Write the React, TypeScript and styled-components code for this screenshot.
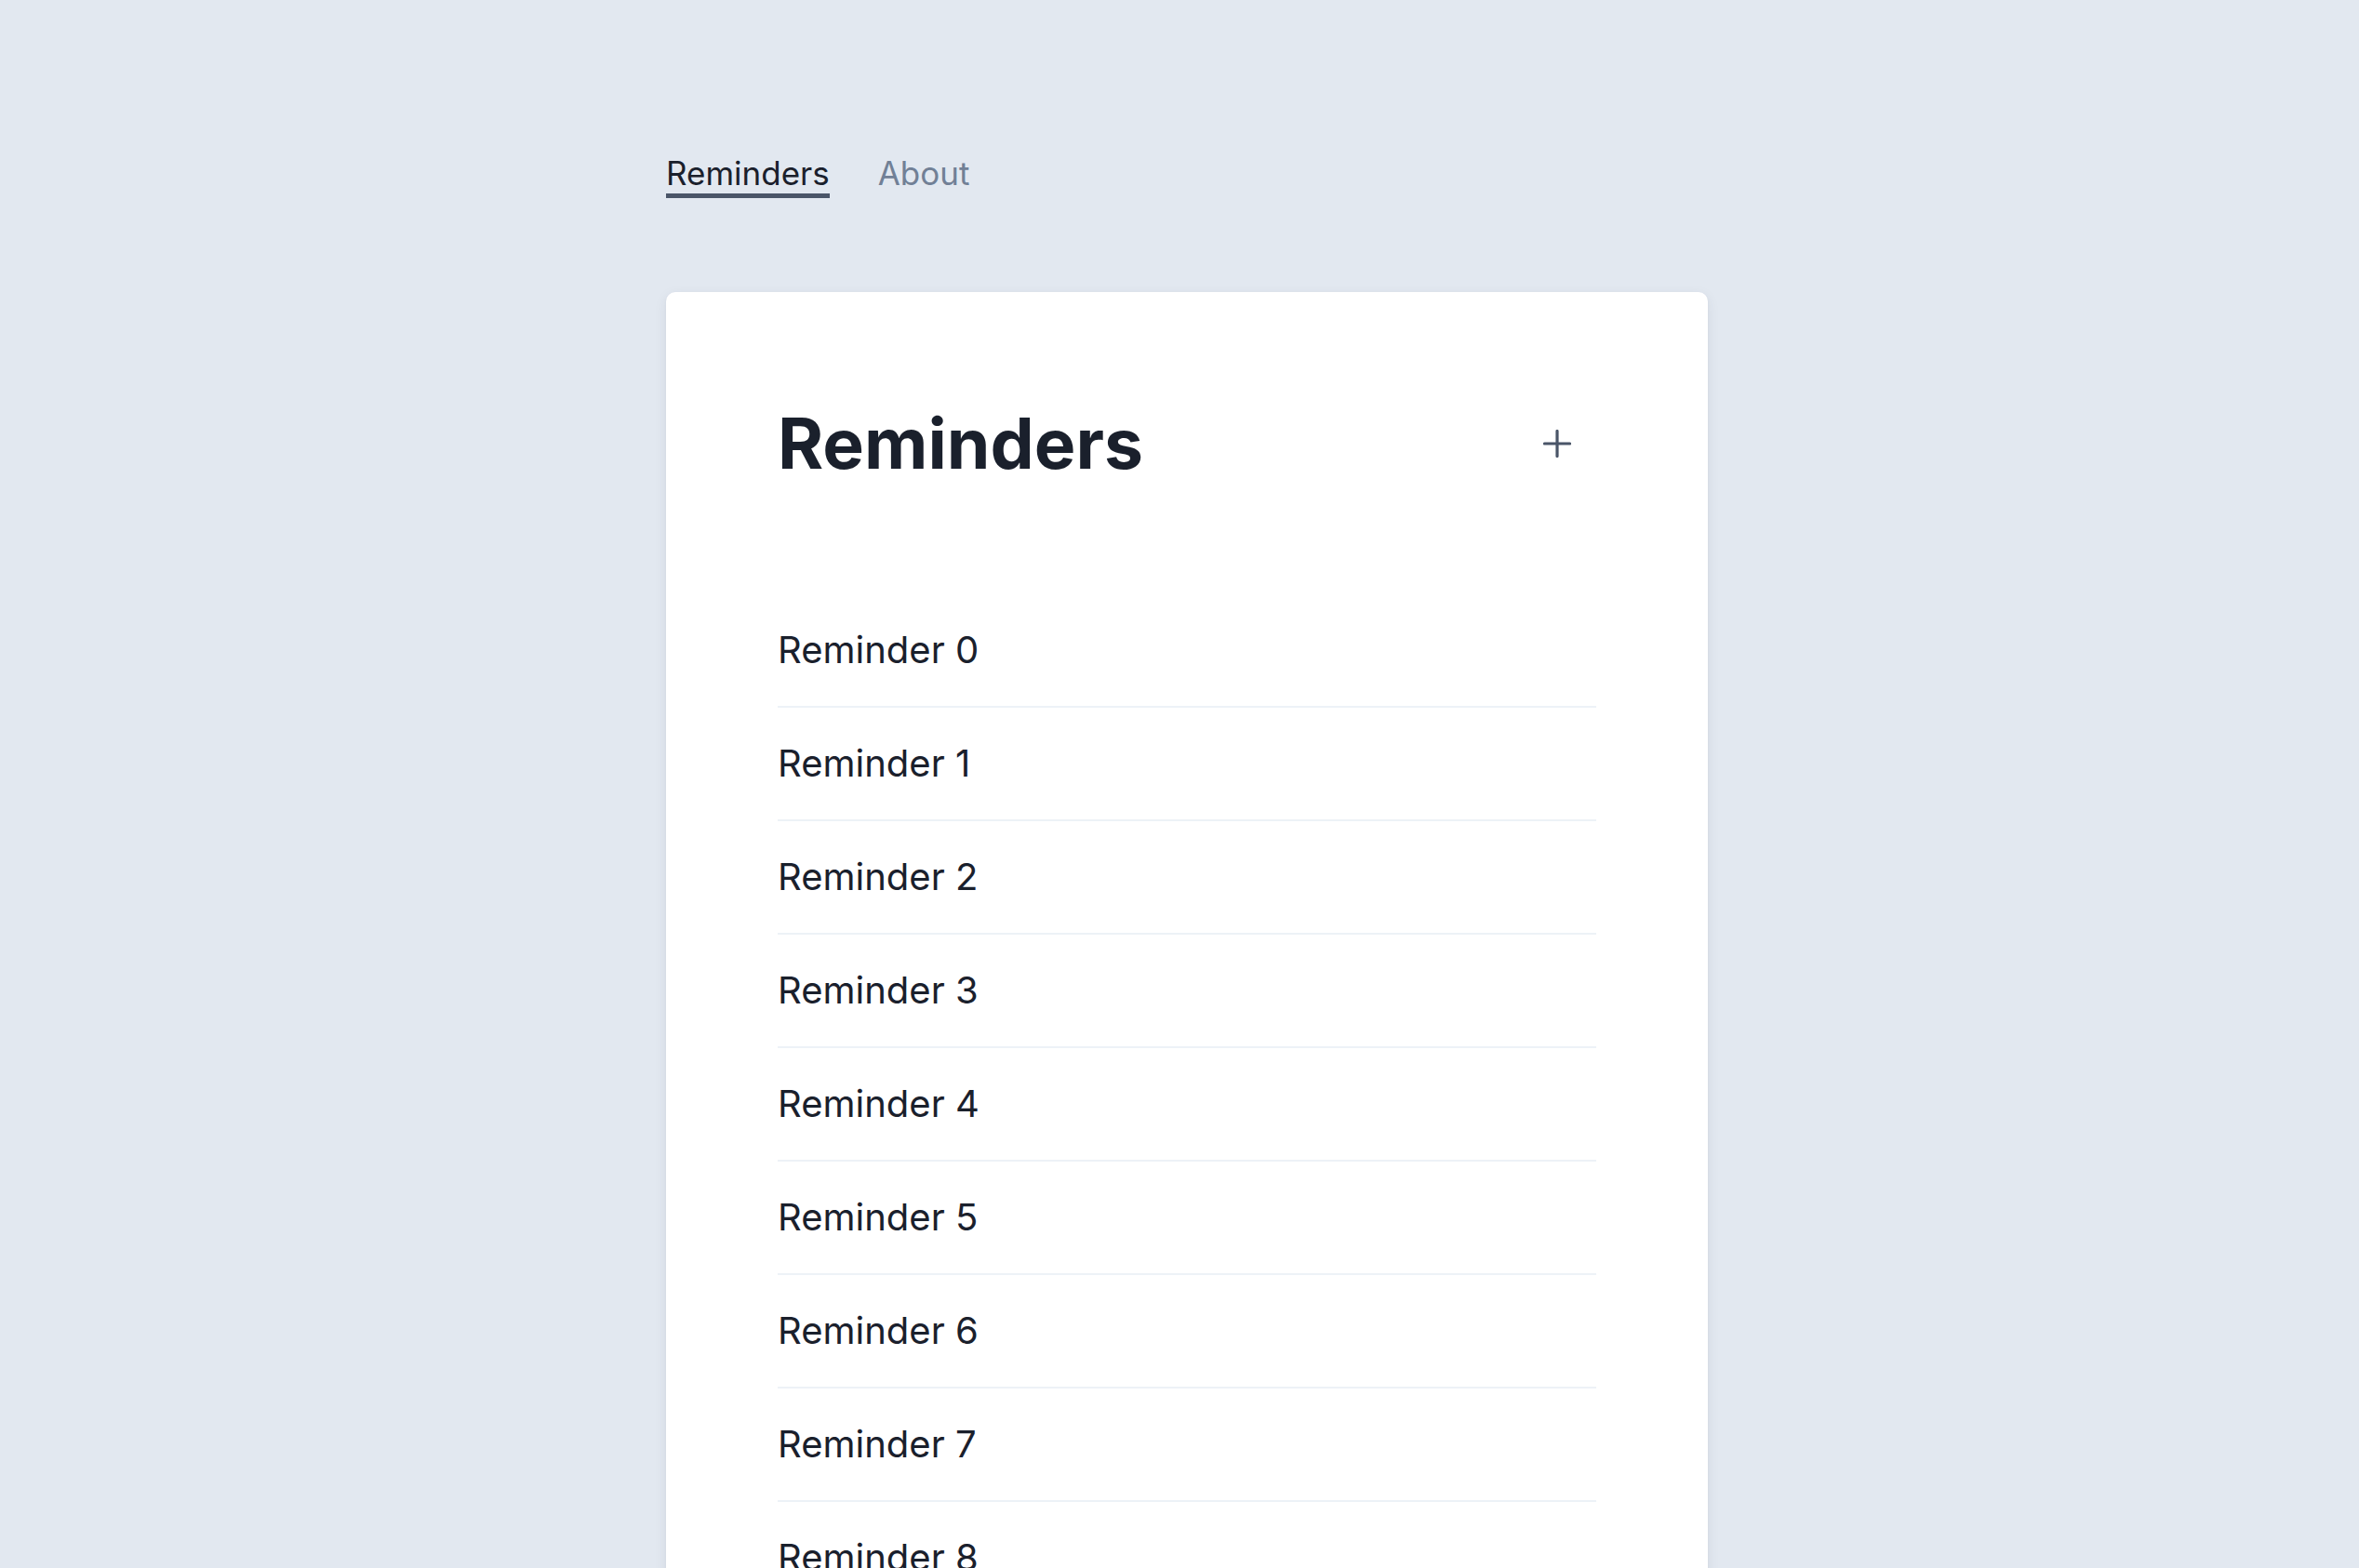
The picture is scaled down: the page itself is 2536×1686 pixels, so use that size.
import React from "react";
import styled, { createGlobalStyle } from "styled-components";

const GlobalStyle = createGlobalStyle`
  html, body {
    margin: 0;
    padding: 0;
    background: #e2e8f0;
    font-family: Inter, "Noto Sans", "Liberation Sans", sans-serif;
    color: #1a202c;
  }
  * { box-sizing: border-box; }
`;

const Page = styled.div`
  width: 1136px;
  margin: 0 auto;
  padding: 165px 0 0 16px;
`;

const Nav = styled.nav`
  display: flex;
  gap: 52px;
  align-items: flex-start;
`;

const NavLink = styled.a<{ $active?: boolean }>`
  font-size: 35px;
  line-height: 42px;
  padding-bottom: 1px;
  text-decoration: none;
  cursor: pointer;
  color: ${(p) => (p.$active ? "#1a202c" : "#718096")};
  border-bottom: 5px solid ${(p) => (p.$active ? "#4a5568" : "transparent")};
`;

const Card = styled.section`
  margin-top: 101px;
  width: 1120px;
  background: #ffffff;
  border-radius: 10px;
  padding: 120px;
  box-shadow: 0 4px 14px rgba(45, 55, 72, 0.08), 0 1px 3px rgba(45, 55, 72, 0.05);
`;

const Header = styled.header`
  display: flex;
  align-items: center;
  justify-content: space-between;
`;

const Title = styled.h1`
  margin: 0;
  font-size: 75px;
  line-height: 86px;
  font-weight: 700;
  color: #1a202c;
`;

const AddButton = styled.button`
  width: 84px;
  height: 84px;
  display: flex;
  align-items: center;
  justify-content: center;
  background: transparent;
  border: none;
  padding: 0;
  cursor: pointer;
  color: #4a5568;
`;

const List = styled.ul`
  list-style: none;
  margin: 119px 0 0;
  padding: 0;
`;

const Row = styled.li`
  font-size: 40px;
  line-height: 60px;
  padding: 30px 0;
  border-bottom: 2px solid #edf2f7;
  color: #1a202c;
`;

const PlusIcon = () => (
  <svg width="30" height="30" viewBox="0 0 30 30" fill="none" stroke="currentColor" strokeWidth="3.2" strokeLinecap="round">
    <path d="M15 1.5v27M1.5 15h27" />
  </svg>
);

export default function App() {
  const items = Array.from({ length: 14 }, (_, i) => `Reminder ${i}`);
  return (
    <>
      <GlobalStyle />
      <Page>
        <Nav>
          <NavLink $active>Reminders</NavLink>
          <NavLink>About</NavLink>
        </Nav>
        <Card>
          <Header>
            <Title>Reminders</Title>
            <AddButton aria-label="Add reminder">
              <PlusIcon />
            </AddButton>
          </Header>
          <List>
            {items.map((t) => (
              <Row key={t}>{t}</Row>
            ))}
          </List>
        </Card>
      </Page>
    </>
  );
}
